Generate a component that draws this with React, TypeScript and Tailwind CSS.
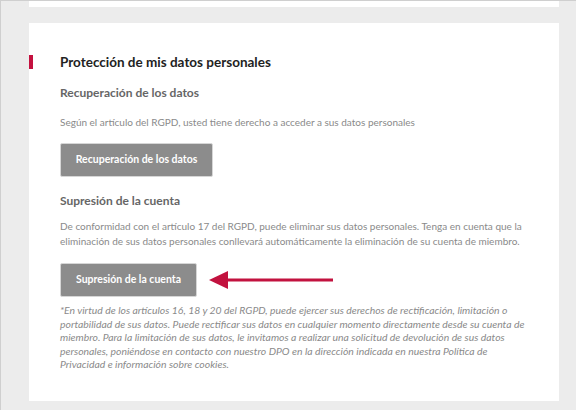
export default function App() {
  return (
    <div
      className="w-[576px] h-[410px] overflow-hidden bg-[#ececec] border-l border-t border-[#cfcfcf] pl-[28px]"
      style={{ fontFamily: 'Lato, "Open Sans", sans-serif' }}
    >
      <div className="w-[530px] h-[6px] bg-white" />

      <div className="w-[530px] h-[378px] mt-[16px] bg-white pt-[29px]">
        <div className="flex items-center gap-[27px]">
          <div className="w-[4px] h-[14px] bg-[#c4113f]" />
          <h2 className="text-[13.5px] leading-[20px] font-bold text-[#222]">Protección de mis datos personales</h2>
        </div>

        <div className="pl-[31px] pr-[30px]">
          <h3 className="mt-[13px] text-[12px] leading-[16px] font-bold text-[#666]">Recuperación de los datos</h3>
          <p className="mt-[14px] text-[10px] leading-[14px] text-[#8a8a8a]">
            Según el artículo del RGPD, usted tiene derecho a acceder a sus datos personales
          </p>
          <button className="mt-[14px] w-[153px] h-[34px] bg-[#8c8c8c] border border-[#d6d6d6] rounded-[2px] text-white text-[10.5px] font-bold">
            Recuperación de los datos
          </button>

          <h3 className="mt-[16px] text-[12px] leading-[16px] font-bold text-[#666]">Supresión de la cuenta</h3>
          <p className="mt-[10px] text-[10px] leading-[14.5px] text-[#8a8a8a]">
            De conformidad con el artículo 17 del RGPD, puede eliminar sus datos personales. Tenga en cuenta que la
            eliminación de sus datos personales conllevará automáticamente la eliminación de su cuenta de miembro.
          </p>

          <div className="mt-[15px] flex items-center gap-[12px]">
            <button className="w-[137px] h-[34px] bg-[#8c8c8c] border border-[#d6d6d6] rounded-[2px] text-white text-[10.5px] font-bold">
              Supresión de la cuenta
            </button>
            <svg width="124" height="20" viewBox="0 0 124 20">
              <polygon points="0,10 19,1 19,19" fill="#c2123f" />
              <rect x="17" y="8.5" width="107" height="3" fill="#c2123f" />
            </svg>
          </div>

          <p className="mt-[7px] text-[10.4px] leading-[13.5px] italic text-[#8a8a8a] whitespace-nowrap">
            *En virtud de los artículos 16, 18 y 20 del RGPD, puede ejercer sus derechos de rectificación, limitación o
            <br />
            portabilidad de sus datos. Puede rectificar sus datos en cualquier momento directamente desde su cuenta de
            <br />
            miembro. Para la limitación de sus datos, le invitamos a realizar una solicitud de devolución de sus datos
            <br />
            personales, poniéndose en contacto con nuestro DPO en la dirección indicada en nuestra Política de
            <br />
            Privacidad e información sobre cookies.
          </p>
        </div>
      </div>
    </div>
  )
}
